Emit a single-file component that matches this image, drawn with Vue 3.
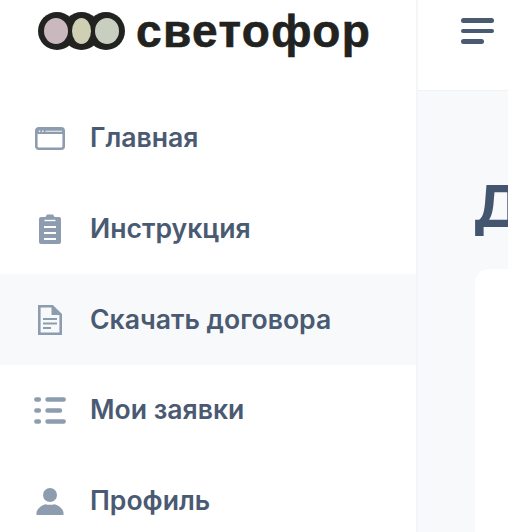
<script setup>
const menu = [
  { label: 'Главная', icon: 'window' },
  { label: 'Инструкция', icon: 'clipboard' },
  { label: 'Скачать договора', icon: 'doc', active: true },
  { label: 'Мои заявки', icon: 'list' },
  { label: 'Профиль', icon: 'user' },
]
</script>

<template>
  <div class="page">
    <aside class="sidebar">
      <div class="logo">
        <svg class="logo-mark" width="87" height="38" viewBox="0 0 87 38">
          <circle cx="19" cy="19" r="19" fill="#222220" />
          <circle cx="43.500" cy="19" r="19" fill="#222220" />
          <circle cx="68" cy="19" r="19" fill="#222220" />
          <ellipse cx="18" cy="19" rx="12" ry="13" fill="#c9b9bf" />
          <ellipse cx="43.500" cy="19" rx="9.500" ry="13" fill="#cfcfb4" />
          <ellipse cx="69" cy="19" rx="12" ry="13" fill="#c8cfc0" />
        </svg>
        <span class="logo-text">светофор</span>
      </div>
      <nav class="menu">
        <a v-for="item in menu" :key="item.label" class="item" :class="{ active: item.active }">
          <span class="icon">
            <svg v-if="item.icon === 'window'" width="30" height="23" viewBox="0 0 30 23">
              <rect x="1.300" y="1.300" width="27.400" height="20.400" rx="2.500" fill="none" stroke="#8d9cae" stroke-width="2.600" />
              <rect x="1.500" y="2" width="27" height="5" fill="#8d9cae" />
              <circle cx="4.500" cy="4.300" r="1" fill="#dfe4ea" />
              <circle cx="7.800" cy="4.300" r="1" fill="#dfe4ea" />
              <rect x="10.500" y="3.700" width="16.500" height="1.200" fill="#dfe4ea" />
            </svg>
            <svg v-else-if="item.icon === 'clipboard'" width="24" height="30" viewBox="0 0 24 30">
              <path d="M3 3h4.500L9 0.500h6L16.500 3H21a2 2 0 0 1 2 2v23a2 2 0 0 1-2 2H3a2 2 0 0 1-2-2V5a2 2 0 0 1 2-2z" fill="#8d9cae" />
              <path d="M6.500 6.500h11" stroke="#fff" stroke-width="1.400" />
              <path d="M6 13h12M6 19h12M6 25h12" stroke="#fff" stroke-width="1.800" />
            </svg>
            <svg v-else-if="item.icon === 'doc'" width="24" height="30" viewBox="0 0 24 30">
              <path d="M1.300 1.300h13L22.700 9.500v19.200H1.300z" fill="none" stroke="#8d9cae" stroke-width="2.600" />
              <path d="M13.500 1.300V10H23z" fill="#8d9cae" />
              <path d="M5 14h14M5 18.500h14M5 23h8" stroke="#8d9cae" stroke-width="2.200" />
            </svg>
            <svg v-else-if="item.icon === 'list'" width="32" height="27" viewBox="0 0 32 27">
              <g stroke="#8d9cae" stroke-linecap="round" stroke-width="4.400" fill="none">
                <path d="M2.300 2.500h2.600M2.300 13.500h2.600M2.300 24.500h2.600" />
                <path d="M13.500 2.500h16.200M13.500 13.500h12.500M13.500 24.500h16.200" />
              </g>
            </svg>
            <svg v-else width="28" height="27" viewBox="0 0 28 27">
              <circle cx="14" cy="7" r="7" fill="#8d9cae" />
              <path d="M0.500 27v-2.500C1 20.500 6 17 9.500 16.200c2.500 0.800 6.500 0.800 9 0C22 17 27 20.500 27.500 24.500V27z" fill="#8d9cae" />
            </svg>
          </span>
          <span class="label">{{ item.label }}</span>
        </a>
      </nav>
    </aside>
    <main class="main">
      <header class="topbar">
        <button class="burger"><i></i><i></i><i class="short"></i></button>
      </header>
      <section class="content">
        <h1 class="title">Д</h1>
        <div class="card"></div>
      </section>
    </main>
  </div>
</template>

<style>
html, body {
  margin: 0;
  height: 100%;
  overflow: hidden;
}
</style>

<style scoped>
.page {
  display: flex;
  width: 508px;
  height: 532px;
  overflow: hidden;
  background: #fff;
  font-family: Inter, Roboto, "Liberation Sans", sans-serif;
}
.sidebar {
  flex: 0 0 418px;
  box-sizing: border-box;
  border-right: 2px solid #f3f5f8;
  background: #fff;
}
.logo {
  display: flex;
  align-items: center;
  height: 62px;
  gap: 11px;
  padding-left: 38px;
}
.logo-text {
  font-family: "Liberation Sans", Arial, sans-serif;
  font-weight: 700;
  font-size: 46px;
  color: #222220;
  letter-spacing: 1.400px;
  line-height: 1;
  -webkit-text-stroke: 0.6px #222220;
}
.menu {
  display: flex;
  flex-direction: column;
  padding-top: 31px;
}
.item {
  display: flex;
  align-items: center;
  height: 90.700px;
  padding-left: 34px;
  color: #4a5a72;
}
.item.active {
  background: #f7f9fb;
}
.icon {
  display: flex;
  align-items: center;
  justify-content: center;
  width: 32px;
  margin-right: 24px;
}
.label {
  font-size: 26.600px;
  font-weight: 600;
  padding-bottom: 2px;
}
.main {
  flex: 1;
  min-width: 0;
  display: flex;
  flex-direction: column;
  background: #f8f9fb;
}
.topbar {
  flex: 0 0 91px;
  box-sizing: border-box;
  background: #fff;
  border-bottom: 1px solid #f0f2f6;
  padding: 0 0 0 43px;
}
.burger {
  display: flex;
  flex-direction: column;
  gap: 6px;
  border: 0;
  background: none;
  padding: 18px 0 0;
}
.burger i {
  display: block;
  width: 33px;
  height: 4.500px;
  border-radius: 3px;
  background: #4a5a72;
}
.burger i.short {
  width: 23px;
}
.content {
  flex: 1;
  padding: 0 0 0 57px;
}
.title {
  margin: 79px 0 0 -2px;
  font-size: 58px;
  font-weight: 700;
  line-height: 72px;
  color: #44566f;
  white-space: nowrap;
}
.card {
  margin-top: 27px;
  height: 300px;
  width: 400px;
  background: #fff;
  border-radius: 14px;
}
</style>
